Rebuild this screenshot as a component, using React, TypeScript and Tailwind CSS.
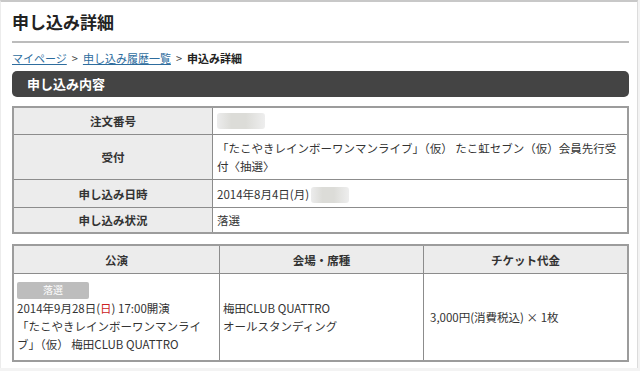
export default function App() {
  return (
    <div
      className="h-[371px] w-[640px] overflow-hidden bg-[#f3f3f3] text-[#333]"
      style={{ fontFamily: '"Noto Sans CJK JP", "Noto Sans", sans-serif' }}
    >
      <div className="h-[368px] w-[638px] border-l border-r border-t-2 border-l-[#ececec] border-r-[#dcdcdc] border-t-[#c8c8c8] bg-white pl-[11px] pr-[8px]">
        <h1 className="mt-[8px] text-[17px] font-bold leading-[24px] text-[#222]">申し込み詳細</h1>
        <div className="mt-[7px] h-[2px] bg-[#bcbcbc]" />

        <div className="mt-[6px] flex h-[18px] items-center text-[11px] leading-[18px] text-[#444]">
          <a className="text-[#2e6d9e] underline">マイページ</a>
          <span className="mx-[5px]">&gt;</span>
          <a className="text-[#2e6d9e] underline">申し込み履歴一覧</a>
          <span className="mx-[5px]">&gt;</span>
          <span className="font-bold text-[#222]">申込み詳細</span>
        </div>

        <div className="mt-[4px] flex h-[26px] items-center rounded-[5px] bg-[#444] pl-[15px] text-[13px] font-bold text-white">
          申し込み内容
        </div>

        <div className="mt-[9px] border-2 border-[#9c9c9c] text-[11.5px] leading-[18px]">
          <Row h="h-[26px]" first label="注文番号">
            <Blur w="w-[48px]" />
          </Row>
          <Row h="h-[45px]" label="受付">
            <span className="whitespace-nowrap">
              「たこやきレインボーワンマンライブ」（仮） たこ虹セブン（仮）会員先行受
              <br />
              付〈抽選〉
            </span>
          </Row>
          <Row h="h-[28px]" label="申し込み日時">
            <span>2014年8月4日(月)</span>
            <span className="ml-[2px]">
              <Blur w="w-[38px]" />
            </span>
          </Row>
          <Row h="h-[25px]" label="申し込み状況">
            <span>落選</span>
          </Row>
        </div>

        <div className="mt-[10px] border-2 border-[#9c9c9c] text-[11.5px] leading-[18px]">
          <div className="flex h-[27px] bg-[#ececec] font-bold text-[#333]">
            <div className="flex w-[206px] items-center justify-center border-r border-[#8c8c8c]">公演</div>
            <div className="flex w-[204px] items-center justify-center border-r border-[#8c8c8c]">会場・席種</div>
            <div className="flex flex-1 items-center justify-center">チケット代金</div>
          </div>
          <div className="flex h-[87px] border-t border-[#8c8c8c]">
            <div className="flex w-[206px] flex-col justify-center border-r border-[#8c8c8c] pl-[3px]">
              <div className="flex h-[17px] w-[72px] items-center justify-center rounded-[2px] bg-[#bdbdbd] text-[10px] text-white">
                落選
              </div>
              <div className="whitespace-nowrap">
                2014年9月28日(<span className="text-[#cc2222]">日</span>) 17:00開演
              </div>
              <div className="whitespace-nowrap">
                「たこやきレインボーワンマンライ
                <br />
                ブ」（仮） 梅田CLUB QUATTRO
              </div>
            </div>
            <div className="flex w-[204px] flex-col justify-center border-r border-[#8c8c8c] pl-[3px]">
              <div>梅田CLUB QUATTRO</div>
              <div>オールスタンディング</div>
            </div>
            <div className="flex flex-1 items-center pl-[6px]">3,000円(消費税込) × 1枚</div>
          </div>
        </div>
      </div>
    </div>
  );
}

function Row({
  h,
  label,
  first,
  children,
}: {
  h: string;
  label: string;
  first?: boolean;
  children: React.ReactNode;
}) {
  return (
    <div className={`flex ${h} ${first ? '' : 'border-t border-[#8c8c8c]'}`}>
      <div className="flex w-[199px] items-center justify-center border-r border-[#8c8c8c] bg-[#ececec] font-bold text-[#333]">
        {label}
      </div>
      <div className="flex flex-1 items-center pl-[4px]">{children}</div>
    </div>
  );
}

function Blur({ w }: { w: string }) {
  return (
    <span
      className={`inline-block h-[16px] ${w} rounded-[3px] bg-[linear-gradient(90deg,#ececec_0%,#dcdcd8_30%,#dcdcd8_60%,#eeeeee_100%)] align-middle`}
    />
  );
}
